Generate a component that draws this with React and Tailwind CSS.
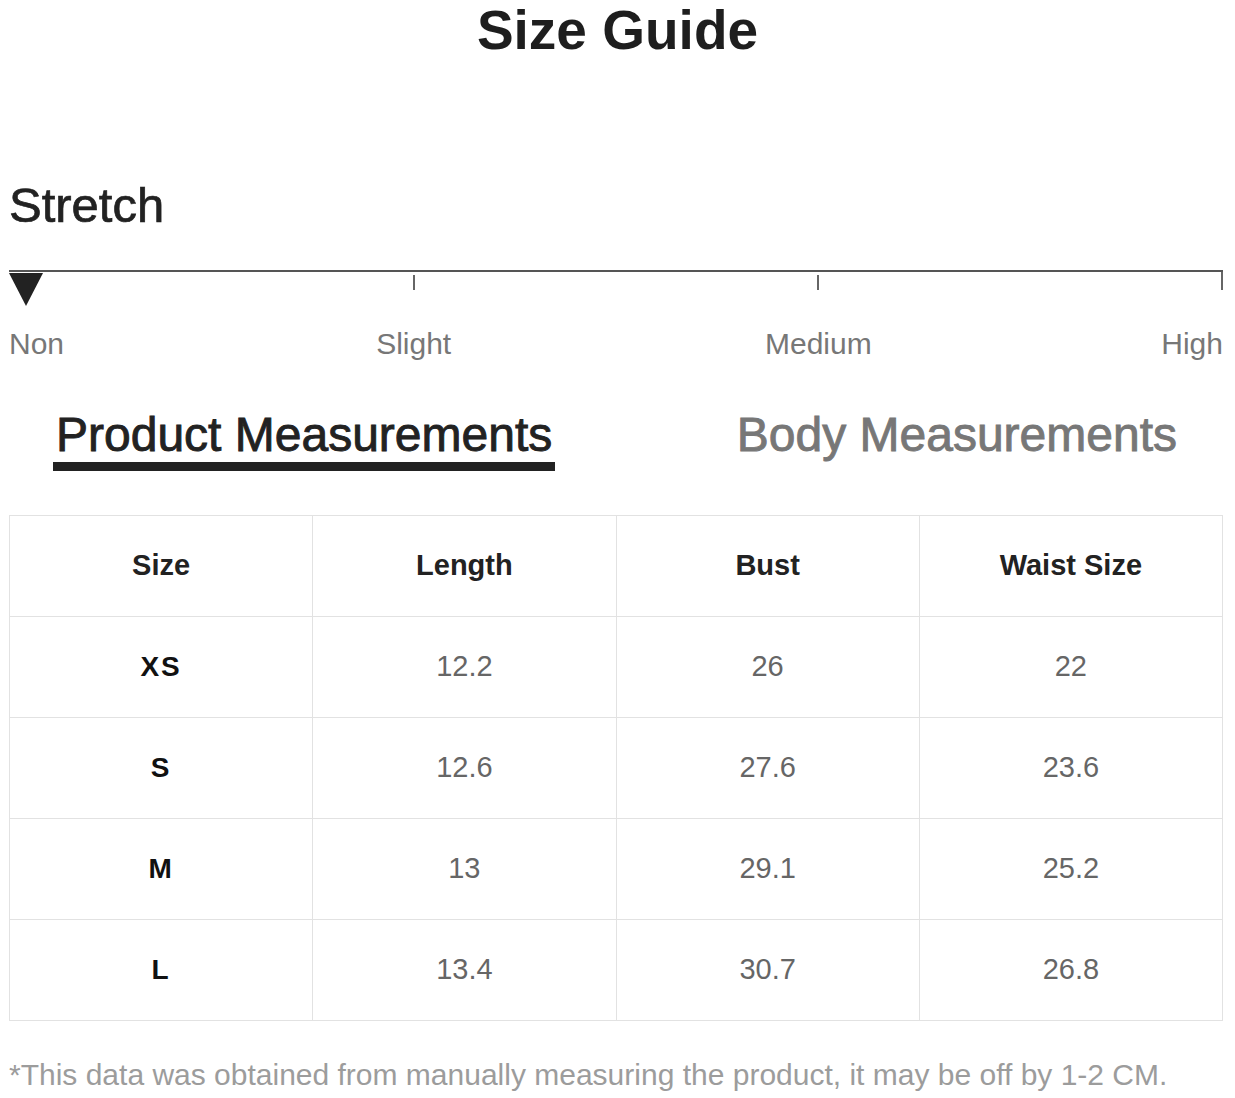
import React from 'react';

const headers = ['Size', 'Length', 'Bust', 'Waist Size'];

const rows = [
  { size: 'XS', length: '12.2', bust: '26', waist: '22' },
  { size: 'S', length: '12.6', bust: '27.6', waist: '23.6' },
  { size: 'M', length: '13', bust: '29.1', waist: '25.2' },
  { size: 'L', length: '13.4', bust: '30.7', waist: '26.8' },
];

const stretchLabels = [
  { label: 'Non', align: 'justify-start' },
  { label: 'Slight', align: 'justify-center' },
  { label: 'Medium', align: 'justify-center' },
  { label: 'High', align: 'justify-end' },
];

const App = () => {
  return (
    <div className="min-h-[1098px] w-[1235px] bg-white font-['Liberation_Sans',Arial,sans-serif]">
      {/* Title */}
      <h1 className="h-[61px] text-center text-[55px] font-bold leading-[61px] text-[#1e1e1e]">Size Guide</h1>

      <div className="ml-[9px] w-[1214px]">
        {/* Stretch */}
        <h2 className="mt-[120px] text-[49px] leading-[48px] text-[#222] [-webkit-text-stroke:0.7px_#222]">Stretch</h2>

        <div className="mt-[41px] border-t-2 border-[#555]">
          <div className="flex h-[34px] justify-between">
            <div className="w-0">
              <div className="mt-[1px] h-0 w-0 border-x-[17px] border-t-[33px] border-x-transparent border-t-[#222]" />
            </div>
            <div className="flex w-0 justify-center">
              <div className="mt-[3px] h-[15px] w-[2px] shrink-0 bg-[#666]" />
            </div>
            <div className="flex w-0 justify-center">
              <div className="mt-[3px] h-[15px] w-[2px] shrink-0 bg-[#666]" />
            </div>
            <div className="flex w-0 justify-end">
              <div className="h-[18px] w-[2px] shrink-0 bg-[#666]" />
            </div>
          </div>

          <div className="mt-[23px] flex justify-between">
            {stretchLabels.map((item) => (
              <div key={item.label} className={`flex w-0 ${item.align}`}>
                <span className="shrink-0 whitespace-nowrap text-[30px] leading-[30px] text-[#777]">{item.label}</span>
              </div>
            ))}
          </div>
        </div>

        {/* Tabs */}
        <div className="mt-[52px] flex items-start justify-between pl-[44px] pr-[46px]">
          <div className="border-b-[9px] border-[#222] px-[3px] pb-[3px]">
            <span className="block text-[48px] leading-[48px] text-[#222] [-webkit-text-stroke:0.9px_#222]">Product Measurements</span>
          </div>
          <span className="block text-[48px] leading-[48px] text-[#777] [-webkit-text-stroke:0.9px_#777]">Body Measurements</span>
        </div>

        {/* Table */}
        <div className="mt-[44px] grid grid-cols-4 border-l border-t border-[#e2e2e2]">
          {headers.map((h) => (
            <div key={h} className="flex h-[101px] items-center justify-center border-b border-r border-[#e2e2e2] text-[29px] font-bold text-[#222]">
              {h}
            </div>
          ))}
          {rows.map((r) => (
            <React.Fragment key={r.size}>
              <div className="flex h-[101px] items-center justify-center border-b border-r border-[#e2e2e2] text-[28px] font-bold tracking-[2px] text-[#111]">
                {r.size}
              </div>
              <div className="flex h-[101px] items-center justify-center border-b border-r border-[#e2e2e2] text-[29px] text-[#666]">
                {r.length}
              </div>
              <div className="flex h-[101px] items-center justify-center border-b border-r border-[#e2e2e2] text-[29px] text-[#666]">
                {r.bust}
              </div>
              <div className="flex h-[101px] items-center justify-center border-b border-r border-[#e2e2e2] text-[29px] text-[#666]">
                {r.waist}
              </div>
            </React.Fragment>
          ))}
        </div>

        <p className="mt-[39px] whitespace-nowrap text-[30px] leading-[30px] text-[#9c9c9c]">
          *This data was obtained from manually measuring the product, it may be off by 1-2 CM.
        </p>
      </div>
    </div>
  );
};

export default App;
